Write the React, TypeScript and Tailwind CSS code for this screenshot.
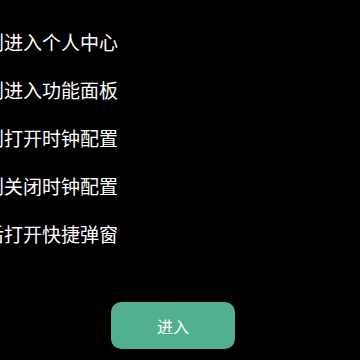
const LINES = [
  "右划进入个人中心",
  "左划进入功能面板",
  "上划打开时钟配置",
  "下划关闭时钟配置",
  "长按后打开快捷弹窗",
];

export default function App() {
  return (
    <div
      className="w-[360px] h-[360px] bg-black overflow-hidden flex flex-col"
      style={{ fontFamily: '"Noto Sans CJK SC", "Noto Sans", sans-serif' }}
    >
      <div className="pt-[18px] flex flex-col items-end w-[150px] -ml-[32px]">
        {LINES.map((t) => (
          <div key={t} className="h-[48px] leading-[48px] text-[19px] text-white whitespace-nowrap">
            {t}
          </div>
        ))}
      </div>
      <button
        type="button"
        className="mt-[44px] ml-[111px] w-[124px] h-[47px] rounded-[10px] bg-[#52b08e] text-white text-[16px] flex items-center justify-center"
      >
        进入
      </button>
    </div>
  );
}
